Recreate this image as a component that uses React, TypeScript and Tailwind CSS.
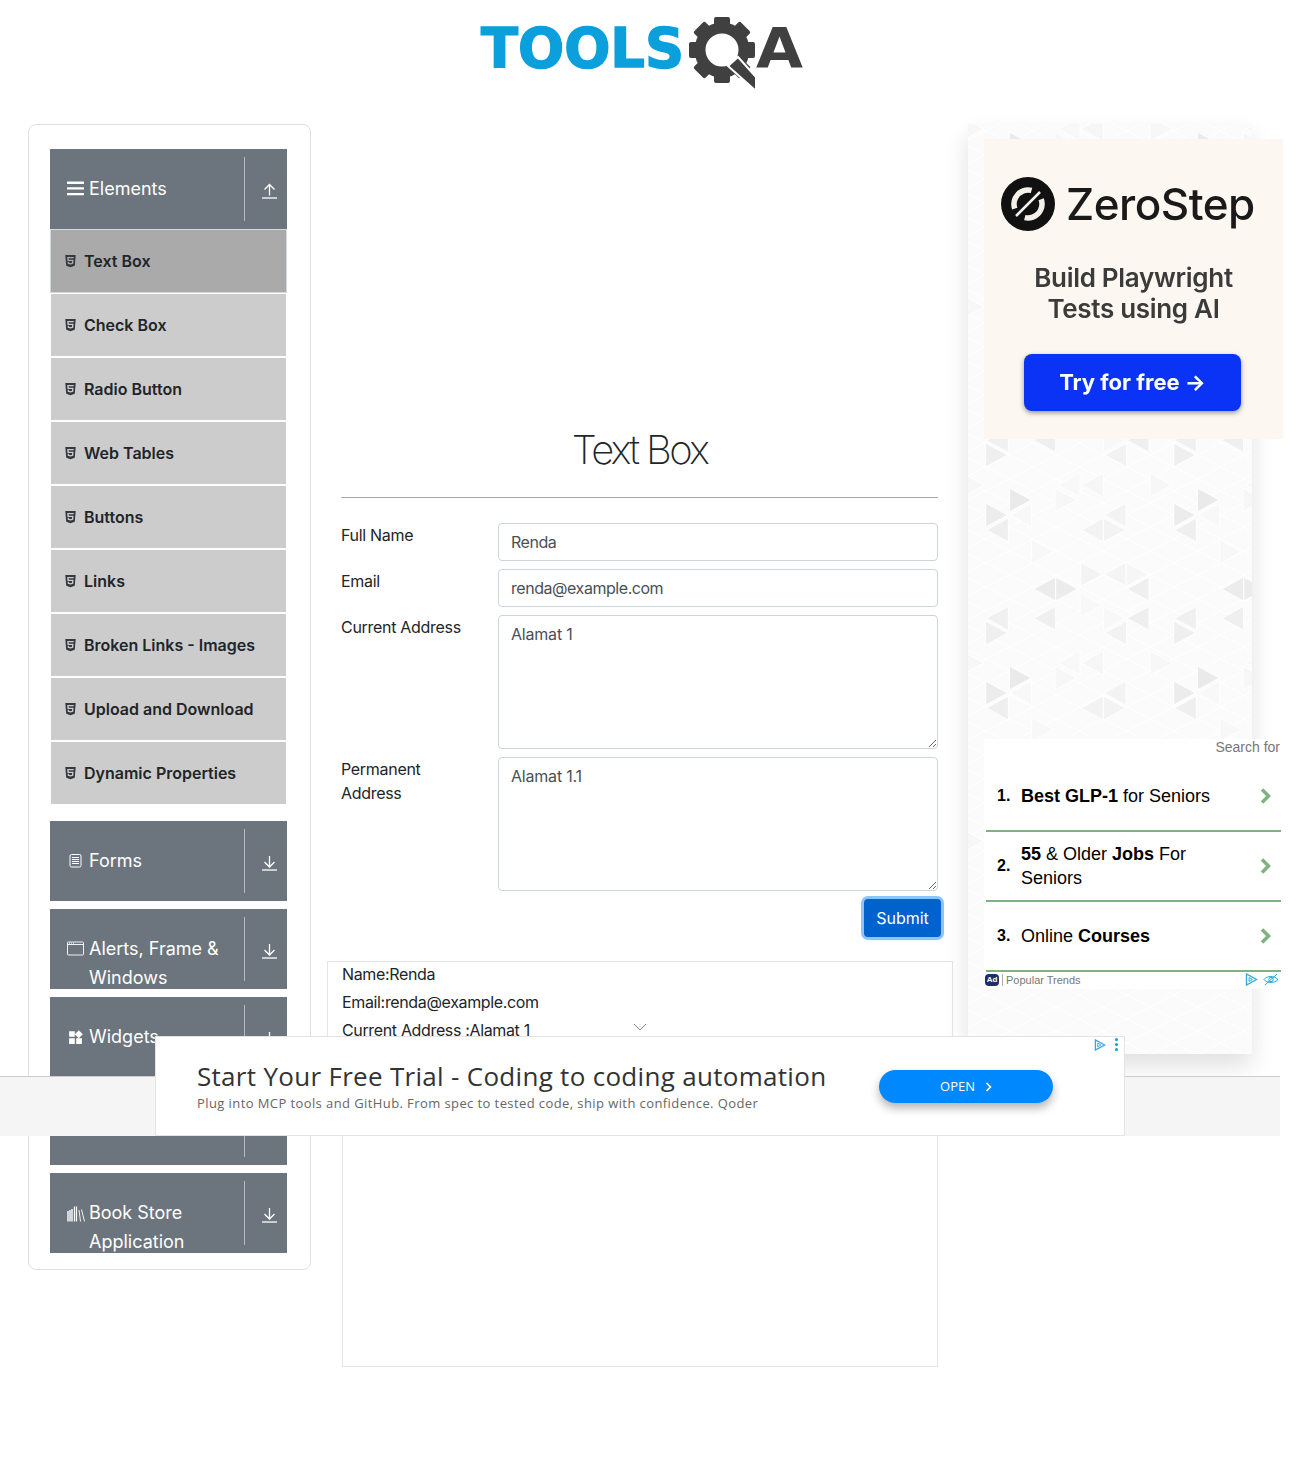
import { FaHtml5 } from "react-icons/fa";
import { MdWidgets } from "react-icons/md";
import { ReactNode } from "react";

const items = [
  "Text Box",
  "Check Box",
  "Radio Button",
  "Web Tables",
  "Buttons",
  "Links",
  "Broken Links - Images",
  "Upload and Download",
  "Dynamic Properties",
];

const Logo = () => {
  const teeth = [0, 45, 90, 135, 180, 225, 270, 315];
  return (
    <svg width="330" height="96" viewBox="476 0 330 96" className="block">
      <text
        x="481"
        y="67"
        textLength="203"
        lengthAdjust="spacingAndGlyphs"
        fontFamily="DejaVu Sans"
        fontWeight="700"
        fontSize="55"
        fill="#0b9fdc"
        stroke="#0b9fdc"
        strokeWidth="1.5"
      >
        TOOLS
      </text>
      <g fill="#404040">
        {teeth.map((t) => (
          <rect key={t} x="714" y="17" width="16" height="14" rx="2" transform={`rotate(${t} 722 50)`} />
        ))}
      </g>
      <circle cx="722" cy="50" r="22" fill="#fff" stroke="#404040" strokeWidth="11" />
      <polygon points="728,66 738,57 756,77 756,91" fill="#404040" stroke="#fff" strokeWidth="2" />
      <text
        x="756"
        y="67"
        textLength="47"
        lengthAdjust="spacingAndGlyphs"
        fontFamily="DejaVu Sans"
        fontWeight="700"
        fontSize="55"
        fill="#404040"
      >
        A
      </text>
    </svg>
  );
};

const ArrowIcon = ({ up }: { up?: boolean }) => (
  <svg width="17" height="16" viewBox="0 0 17 16" fill="none" stroke="#fff" strokeWidth="1.3">
    <path d="M1 15h15" />
    {up ? <path d="M8.5 12.5V1.5M3.5 6.5l5-5 5 5" /> : <path d="M8.5 1v11M3.5 7l5 5 5-5" />}
  </svg>
);

const BarsIcon = () => (
  <svg width="17" height="15" viewBox="0 0 17 15" fill="#fff">
    <rect y="0.5" width="17" height="2.4" rx="0.5" />
    <rect y="6.2" width="17" height="2.4" rx="0.5" />
    <rect y="11.9" width="17" height="2.4" rx="0.5" />
  </svg>
);

const FormIcon = () => (
  <svg width="17" height="15" viewBox="0 0 17 15" fill="none" stroke="#fff" strokeWidth="1">
    <rect x="3" y="1.5" width="11" height="12.5" rx="1.5" />
    <path d="M5 4.5h7M5 6.5h7M5 8.5h7M5 10.5h7" />
  </svg>
);

const WindowIcon = () => (
  <svg width="17" height="15" viewBox="0 0 17 15" fill="none" stroke="#fff" strokeWidth="0.9">
    <rect x="0.5" y="1" width="16" height="13" rx="0.8" />
    <path d="M0.5 3.5h16" />
    <path d="M2 2.2h1M4 2.2h1M6 2.2h1" />
  </svg>
);

const BooksIcon = () => (
  <svg width="18" height="17" viewBox="0 0 18 17" fill="none" stroke="#fff">
    <path d="M1 6v10.5M3 5v11.5M5 4v12.5" strokeWidth="1.4" />
    <path d="M7.5 1.5v15M9.5 1.5v15" strokeWidth="1.2" />
    <path d="M12 5l1.5 11.5M14.5 4.5l3 12" strokeWidth="0.9" />
  </svg>
);

const Group = ({ icon, label, up, children }: { icon: ReactNode; label: string; up?: boolean; children?: ReactNode }) => (
  <div className="w-[237px]">
    <div className="flex h-[80px] overflow-hidden bg-[#6c757d] text-white">
      <div className="flex w-[194px] items-start pt-[25px] pl-[17px]">
        <div className="mt-[7px] flex h-[15px] w-[22px] shrink-0">{icon}</div>
        <div className="text-[18px] leading-[29px]">{label}</div>
      </div>
      <div className="my-2 w-px bg-[#b5babe]" />
      <div className="flex w-[42px] justify-center pt-[34px] pl-[7px]">
        <div>
          <ArrowIcon up={up} />
        </div>
      </div>
    </div>
    {children}
  </div>
);

const TextField = ({ label, value }: { label: string; value: string }) => (
  <div className="mb-2 flex">
    <label className="w-[157px] shrink-0 leading-6 tracking-[-0.3px] text-[#212529]">{label}</label>
    <input
      readOnly
      value={value}
      className="h-[38px] w-[440px] rounded border border-[#ced4da] bg-white px-3 text-base tracking-[-0.45px] text-[#495057] outline-none"
    />
  </div>
);

const AreaField = ({ label, value }: { label: string; value: string }) => (
  <div className="mb-2 flex">
    <label className="w-[157px] shrink-0 pr-8 leading-6 tracking-[-0.3px] text-[#212529]">{label}</label>
    <textarea
      readOnly
      value={value}
      className="block h-[134px] w-[440px] rounded border border-[#ced4da] bg-white px-3 py-[6px] text-base leading-6 tracking-[-0.2px] text-[#495057] outline-none"
    />
  </div>
);

const triangles: [number, number, number, string][] = [
  [62, 60, 1, "#efefef"],
  [133, 195, 1, "#eaeaea"],
  [62, 240, 1, "#ececec"],
  [628, 240, 1, "#ececec"],
  [130, 285, -1, "#efefef"],
  [415, 285, -1, "#f3f3f3"],
  [415, 285, 1, "#f3f3f3"],
  [272, 462, -1, "#ececec"],
  [272, 462, 1, "#ececec"],
  [347, 418, 1, "#f3f3f3"],
  [483, 240, -1, "#f3f3f3"],
  [483, 418, -1, "#f4f4f4"],
  [483, 418, 1, "#f6f6f6"],
  [552, 462, -1, "#efefef"],
  [130, 550, -1, "#f0f0f0"],
  [272, 550, -1, "#efefef"],
  [552, 550, -1, "#efefef"],
  [485, 60, -1, "#f2f2f2"],
  [200, 350, 1, "#f8f8f8"],
  [345, 150, -1, "#f8f8f8"],
  [270, 195, 1, "#f7f7f7"],
  [415, 150, -1, "#f6f6f6"],
  [555, 150, 1, "#f7f7f7"],
  [200, 240, -1, "#f8f8f8"],
  [345, 510, 1, "#f8f8f8"],
  [415, 550, 1, "#f8f8f8"],
];

const Pattern = () => {
  const polys: string[][] = [];
  for (let i = -1; i < 3; i++) {
    for (let j = -2; j < 5; j++) {
      for (const [zx, zy, dir, fill] of triangles) {
        const x = zx / 3 - 3 + i * 188;
        const y = zy / 3 - 45 + j * 178;
        polys.push([`${x},${y - 12} ${x},${y + 12} ${x + dir * 22},${y}`, fill]);
      }
    }
  }
  const lines = [];
  for (let k = -30; k < 60; k++) {
    const y = 7 + k * 24;
    lines.push(<path key={k} d={`M0 ${y - 9}L284 ${y + 136}M0 ${y + 9}L284 ${y - 136}`} />);
  }
  return (
    <svg width="284" height="930" className="absolute top-0 left-0">
      <g stroke="#fff" strokeWidth="1" fill="none">
        {lines}
      </g>
      {polys.map(([points, fill], i) => (
        <polygon key={i} points={points} fill={fill} stroke="#fff" strokeWidth="1" />
      ))}
    </svg>
  );
};

const ZeroStepMark = () => (
  <svg width="54" height="54" viewBox="0 0 54 54" className="shrink-0">
    <circle cx="27" cy="27" r="27" fill="#111" />
    <circle cx="27" cy="27" r="14" fill="none" stroke="#f5f0ea" strokeWidth="5.5" strokeDasharray="30 14" transform="rotate(-20 27 27)" />
    <path d="M15 39L39 15" stroke="#111" strokeWidth="7" />
    <path d="M15 39L39 15" stroke="#f5f0ea" strokeWidth="2.5" />
  </svg>
);

const AdChoice = ({ size = 13 }: { size?: number }) => (
  <svg width={size} height={size} viewBox="0 0 13 13" fill="none" stroke="#3aa7dc" strokeWidth="1.4">
    <path d="M1.5 1v11l10-5.5z" />
    <path d="M4 4.5v4l3.5-2z" strokeWidth="1" />
  </svg>
);

const Chevron = () => (
  <svg width="11" height="16" viewBox="0 0 11 16" fill="none" stroke="#7fb27f" strokeWidth="3.5">
    <path d="M2 1.5L8.5 8 2 14.5" />
  </svg>
);

const SearchRow = ({ n, children }: { n: number; children: ReactNode }) => (
  <div className="ml-[2px] flex h-[70px] w-[295px] items-center border-b-2 border-[#7fb27f] pl-[11px]">
    <div className="w-6 shrink-0 text-[16px] font-bold text-black">{n}.</div>
    <div className="w-[220px] text-[18px] leading-6 text-black">{children}</div>
    <div className="ml-[19px]">
      <Chevron />
    </div>
  </div>
);

const RightAds = () => (
  <div className="relative h-[930px] w-[284px] bg-[#fbfbfb] shadow-[0_12px_22px_rgba(0,0,0,0.12)]">
    <Pattern />
    <div className="relative pt-[15px] pl-4">
      <div className="flex h-[300px] w-[299px] flex-col items-center bg-[#fcf7f1] font-['Inter',sans-serif] blur-[0.4px]">
        <div className="mt-[38px] flex w-full items-center pl-[17px]">
          <ZeroStepMark />
          <div className="ml-[11px] text-[44px] leading-[54px] font-medium tracking-[-0.5px] text-[#1a1a1a]">ZeroStep</div>
        </div>
        <div className="mt-[31px] text-center text-[26px] leading-[31px] font-semibold tracking-[-0.3px] text-[#3b3b3b]">
          Build Playwright
          <br />
          Tests using AI
        </div>
        <div className="mt-[30px] -ml-[2px] flex h-[57px] w-[217px] items-center justify-center rounded-lg bg-[#0a33f5] text-[22px] font-bold text-white shadow-[0_2px_5px_rgba(0,0,0,0.4)]">
          Try for free →
        </div>
      </div>
      <div className="mt-[300px] h-[250px] w-[297px] bg-white font-['Liberation_Sans',Arial,sans-serif]">
        <div className="h-[23px] pr-px text-right text-[14px] leading-4 text-[#777]">Search for</div>
        <SearchRow n={1}>
          <b>Best GLP-1</b> for Seniors
        </SearchRow>
        <SearchRow n={2}>
          <b>55</b> &amp; Older <b>Jobs</b> For Seniors
        </SearchRow>
        <SearchRow n={3}>
          Online <b>Courses</b>
        </SearchRow>
        <div className="flex items-center pt-[1px] pl-px">
          <div className="flex h-3 w-[14px] items-center justify-center rounded-sm bg-[#1c2f66] text-[8px] font-bold text-white">Ad</div>
          <div className="mx-[3px] h-3 w-px bg-[#aaa]" />
          <div className="text-[11px] leading-3 text-[#777]">Popular Trends</div>
          <div className="ml-auto flex items-center gap-[5px] pr-[2px]">
            <AdChoice />
            <svg width="16" height="13" viewBox="0 0 16 13" fill="none" stroke="#18a9d8" strokeWidth="1">
              <path d="M1 6.5C4 2.5 11 2.5 15 6.5 11 10.5 4 10.5 1 6.5z" />
              <circle cx="8" cy="6.5" r="2.2" />
              <path d="M2 12L14 1" />
            </svg>
          </div>
        </div>
      </div>
    </div>
  </div>
);

const BottomAd = () => (
  <>
    <div className="absolute top-[1076px] left-0 h-[60px] w-[1280px] border-t border-[#ccc] bg-[#f5f5f5]" />
    <div className="absolute top-[1036px] left-[155px] flex h-[100px] w-[970px] items-center border border-[#e3e3e3] bg-white font-['Open_Sans',sans-serif]">
      <div className="w-[723px] pl-[41px]">
        <div className="text-[26px] leading-[34px] tracking-[0.3px] whitespace-nowrap text-[#333]">
          Start Your Free Trial - Coding to coding automation
        </div>
        <div className="text-[13px] leading-5 tracking-[0.41px] whitespace-nowrap text-[#666]">
          Plug into MCP tools and GitHub. From spec to tested code, ship with confidence. Qoder
        </div>
      </div>
      <div className="mt-[1px] flex h-[33px] w-[174px] items-center justify-center gap-[10px] rounded-full bg-[#0088ff] text-[13px] font-medium text-white shadow-[0_5px_10px_rgba(0,0,0,0.3)]">
        OPEN
        <svg width="7" height="10" viewBox="0 0 7 10" fill="none" stroke="#fff" strokeWidth="1.6">
          <path d="M1.5 1l4 4-4 4" />
        </svg>
      </div>
      <div className="absolute top-[1px] right-[6px] flex items-center gap-[9px]">
        <AdChoice size={12} />
        <div className="flex flex-col gap-[2px]">
          <div className="h-[3px] w-[3px] rounded-full bg-[#00a3cc]" />
          <div className="h-[3px] w-[3px] rounded-full bg-[#00a3cc]" />
          <div className="h-[3px] w-[3px] rounded-full bg-[#00a3cc]" />
        </div>
      </div>
    </div>
  </>
);

export default function App() {
  return (
    <div className="relative h-[1467px] w-[1280px] bg-white font-['Inter',sans-serif] text-base">
      <div className="flex h-[124px] justify-center pl-[2px]">
        <Logo />
      </div>

      <div className="flex pl-[28px]">
        <aside className="h-[1146px] w-[283px] rounded-lg border border-[#dfdfdf] pt-6 pl-[21px]">
          <Group icon={<BarsIcon />} label="Elements" up>
            <div>
              {items.map((item, i) => (
                <div
                  key={item}
                  className={
                    i === 0
                      ? "flex h-[64px] w-[237px] items-center border border-[#d3d9e1] bg-[#aaaaaa] pl-[13px] font-semibold text-[#212529]"
                      : "flex h-[64px] w-[237px] items-center border border-white bg-[#cccccc] pl-[13px] font-semibold text-[#212529]"
                  }
                >
                  <FaHtml5 className="mr-[7px] h-[14px] w-[13px] text-[#343a40]" />
                  {item}
                </div>
              ))}
            </div>
          </Group>
          <div className="mt-4 flex flex-col gap-2">
            <Group icon={<FormIcon />} label="Forms" />
            <Group icon={<WindowIcon />} label="Alerts, Frame & Windows" />
            <Group icon={<MdWidgets className="h-[17px] w-[17px] text-white" />} label="Widgets" />
            <Group icon={<span />} label="Interactions" />
            <Group icon={<BooksIcon />} label="Book Store Application" />
          </div>
        </aside>

        <main className="ml-[30px] w-[597px]">
          <h1 className="mt-[302px] text-center text-[40px] leading-[48px] font-extralight tracking-[-0.065em] text-[#212529]">Text Box</h1>
          <div className="mt-[23px] mb-[25px] h-px bg-[#aaa]" />
          <TextField label="Full Name" value="Renda" />
          <TextField label="Email" value="renda@example.com" />
          <AreaField label="Current Address" value="Alamat 1" />
          <AreaField label="Permanent Address" value="Alamat 1.1" />
          <div className="-mr-[3px] flex justify-end">
            <button className="h-[38px] w-[77px] rounded bg-[#0062cc] text-white ring-[3px] ring-[#8cc4ff]">Submit</button>
          </div>
          <div className="relative mt-6 -mr-[15px] -ml-[14px] flex h-[140px] flex-col gap-1 border border-[#e5e5e5] px-[14px] tracking-[-0.35px]">
            <div className="leading-6 text-[#212529]">Name:Renda</div>
            <div className="leading-6 text-[#212529]">Email:renda@example.com</div>
            <div className="leading-6 text-[#212529]">Current Address :Alamat 1</div>
            <svg width="14" height="8" viewBox="0 0 14 8" fill="none" stroke="#888" className="absolute top-[61px] left-[305px]">
              <path d="M1 1l6 6 6-6" />
            </svg>
          </div>
          <div className="ml-px h-[266px] w-[596px] border border-[#e5e5e5]" />
        </main>

        <div className="ml-[30px]">
          <RightAds />
        </div>
      </div>

      <BottomAd />
    </div>
  );
}
